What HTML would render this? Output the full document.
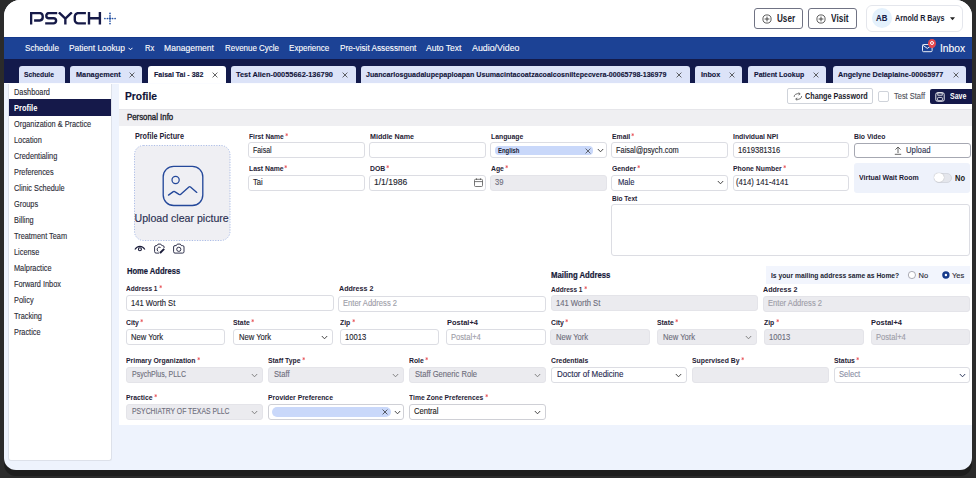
<!DOCTYPE html>
<html><head><meta charset="utf-8"><style>
html,body{margin:0;padding:0;}
body{width:976px;height:478px;background:#2b2b2b;position:relative;overflow:hidden;font-family:"Liberation Sans", sans-serif;}
#shadow{position:absolute;left:4px;top:0;width:968px;height:476px;border-radius:16px 16px 12px 12px;background:#1d1d1d;}
#app{position:absolute;left:4px;top:0;width:968px;height:470px;border-radius:16px 16px 12px 12px;overflow:hidden;background:#eef3fd;}
#w{position:absolute;left:-4px;top:0;width:976px;height:478px;}
.t{position:absolute;white-space:nowrap;line-height:1;transform-origin:0 0;}
.r{position:absolute;}
</style></head><body>
<div id="shadow"></div>
<div id="app"><div id="w">
<div class="r" style="left:0px;top:0px;width:976px;height:37px;background:#fff;"></div>
<svg class="r" style="left:30px;top:12px" width="90" height="14" viewBox="0 0 90 14"><g fill="none" stroke="#161a48" stroke-width="2.4"><path d="M1.1 12.5V1.1H9.8A3.2 3.2 0 0 1 12.7 4.3V5.4A3.2 3.2 0 0 1 9.8 8.5H4.1"/><path transform="translate(15.2 0)" d="M12 1.1H3.7A2.6 2.6 0 0 0 1.1 3.7V3.65A2.6 2.6 0 0 0 3.7 6.25H8.3A2.6 2.6 0 0 1 10.9 8.85V8.8A2.6 2.6 0 0 1 8.3 11.4H0"/><path transform="translate(28.1 0)" d="M0.8 0.4L7.25 6.6L13.7 0.4M7.25 6.6V12.5"/><path transform="translate(43.7 0)" d="M12.2 1.1H4.6A3.5 3.5 0 0 0 1.1 4.6V7.9A3.5 3.5 0 0 0 4.6 11.4H12.2"/><path transform="translate(57.9 0)" d="M1.1 0V12.5M12 0V12.5M1.1 6.25H12"/></g><g fill="#2451a3"><circle cx="80" cy="6.5" r="1.3"/><circle cx="80" cy="1.4" r="0.85"/><circle cx="80" cy="3.9" r="0.85"/><circle cx="80" cy="9.1" r="0.85"/><circle cx="80" cy="11.6" r="0.85"/><circle cx="74.9" cy="6.5" r="0.85"/><circle cx="77.4" cy="6.5" r="0.85"/><circle cx="82.6" cy="6.5" r="0.85"/><circle cx="85.1" cy="6.5" r="0.85"/></g></svg>
<div class="r" style="left:754px;top:8px;width:49px;height:21px;border:1px solid #707384;border-radius:3px;box-sizing:border-box;background:#fff;"></div>
<svg class="r" style="left:761.5px;top:13.5px" width="10" height="10" viewBox="0 0 10 10"><circle cx="5" cy="5" r="4.1" fill="none" stroke="#333" stroke-width="0.8"/><path d="M5 2.6V7.4M2.6 5H7.4" stroke="#333" stroke-width="0.85"/></svg>
<div class="t" style="left:776.7px;top:14px;font-size:10.3px;font-weight:bold;color:#1b1b2b;transform:scaleX(0.790);">User</div>
<div class="r" style="left:808px;top:8px;width:49px;height:21px;border:1px solid #707384;border-radius:3px;box-sizing:border-box;background:#fff;"></div>
<svg class="r" style="left:815.5px;top:13.5px" width="10" height="10" viewBox="0 0 10 10"><circle cx="5" cy="5" r="4.1" fill="none" stroke="#333" stroke-width="0.8"/><path d="M5 2.6V7.4M2.6 5H7.4" stroke="#333" stroke-width="0.85"/></svg>
<div class="t" style="left:831.0px;top:14px;font-size:10.3px;font-weight:bold;color:#1b1b2b;transform:scaleX(0.811);">Visit</div>
<div class="r" style="left:866px;top:5px;width:97px;height:27px;border:1px solid #e4e6ec;border-radius:6px;box-sizing:border-box;background:#fff;"></div>
<div class="r" style="left:872px;top:8px;width:20px;height:20px;background:#e4f1fc;border-radius:50%;"></div>
<div class="t" style="left:876.0px;top:13px;font-size:9.6px;font-weight:bold;color:#171b45;-webkit-text-stroke:0.1px #171b45;transform:scaleX(0.815);">AB</div>
<div class="t" style="left:894.7px;top:14px;font-size:8.4px;font-weight:bold;color:#1b1d33;transform:scaleX(0.859);">Arnold R Bays</div>
<svg class="r" style="left:949.5px;top:16.5px" width="5" height="4" viewBox="0 0 5 4"><path d="M0 0.3H5L2.5 3.3Z" fill="#222"/></svg>
<div class="r" style="left:0px;top:37px;width:976px;height:22px;background:#1c4295;"></div>
<div class="r" style="left:0px;top:37px;width:976px;height:1px;background:#14388a;"></div>
<div class="t" style="left:24.6px;top:44px;font-size:9.2px;font-weight:normal;color:#fff;-webkit-text-stroke:0.1px #fff;transform:scaleX(0.886);">Schedule</div>
<div class="t" style="left:68.9px;top:44px;font-size:9.2px;font-weight:normal;color:#fff;-webkit-text-stroke:0.1px #fff;transform:scaleX(0.912);">Patient Lookup</div>
<div class="t" style="left:145.0px;top:44px;font-size:9.2px;font-weight:normal;color:#fff;-webkit-text-stroke:0.1px #fff;transform:scaleX(0.827);">Rx</div>
<div class="t" style="left:164.4px;top:44px;font-size:9.2px;font-weight:normal;color:#fff;-webkit-text-stroke:0.1px #fff;transform:scaleX(0.931);">Management</div>
<div class="t" style="left:224.6px;top:44px;font-size:9.2px;font-weight:normal;color:#fff;-webkit-text-stroke:0.1px #fff;transform:scaleX(0.866);">Revenue Cycle</div>
<div class="t" style="left:289.0px;top:44px;font-size:9.2px;font-weight:normal;color:#fff;-webkit-text-stroke:0.1px #fff;transform:scaleX(0.878);">Experience</div>
<div class="t" style="left:339.6px;top:44px;font-size:9.2px;font-weight:normal;color:#fff;-webkit-text-stroke:0.1px #fff;transform:scaleX(0.895);">Pre-visit Assessment</div>
<div class="t" style="left:426.3px;top:44px;font-size:9.2px;font-weight:normal;color:#fff;-webkit-text-stroke:0.1px #fff;transform:scaleX(0.930);">Auto Text</div>
<div class="t" style="left:472.0px;top:44px;font-size:9.2px;font-weight:normal;color:#fff;-webkit-text-stroke:0.1px #fff;transform:scaleX(0.961);">Audio/Video</div>
<svg class="r" style="left:127.5px;top:46.5px" width="5" height="4" viewBox="0 0 5 4"><path d="M0.5 0.8L2.5 2.8L4.5 0.8" fill="none" stroke="#fff" stroke-width="1"/></svg>
<svg class="r" style="left:921.5px;top:44px" width="11" height="9" viewBox="0 0 11 9"><rect x="0.5" y="0.5" width="9.6" height="7.2" rx="1" fill="none" stroke="#fff" stroke-width="0.9"/><path d="M0.8 1.2L5.3 4.4L9.8 1.2" fill="none" stroke="#fff" stroke-width="0.9"/></svg>
<div class="r" style="left:928px;top:39px;width:8px;height:9px;background:#e5484d;border-radius:50%;"></div>
<svg class="r" style="left:928px;top:39.2px" width="8" height="8" viewBox="0 0 8 8"><circle cx="4" cy="4" r="1.5" fill="none" stroke="#fff" stroke-width="1"/></svg>
<div class="t" style="left:939.7px;top:44px;font-size:10.4px;font-weight:normal;color:#fff;-webkit-text-stroke:0.1px #fff;transform:scaleX(0.990);">Inbox</div>
<div class="r" style="left:0px;top:59px;width:976px;height:24px;background:#131a4b;"></div>
<div class="r" style="left:0px;top:83px;width:976px;height:1px;background:#fbfcff;"></div>
<div class="r" style="left:19px;top:66px;width:46px;height:17px;background:#dce3f8;border-radius:3px 3px 0 0;"></div>
<div class="t" style="left:24.4px;top:71px;font-size:7.6px;font-weight:bold;color:#11143a;-webkit-text-stroke:0.12px #11143a;transform:scaleX(0.888);">Schedule</div>
<div class="r" style="left:70px;top:66px;width:72px;height:17px;background:#dce3f8;border-radius:3px 3px 0 0;"></div>
<div class="t" style="left:75.8px;top:71px;font-size:7.6px;font-weight:bold;color:#11143a;-webkit-text-stroke:0.12px #11143a;transform:scaleX(0.962);">Management</div>
<svg class="r" style="left:129px;top:72px" width="6" height="6" viewBox="0 0 6 6"><path d="M0.6 0.6L5.4 5.4M5.4 0.6L0.6 5.4" stroke="#333" stroke-width="0.75"/></svg>
<div class="r" style="left:148px;top:66px;width:78px;height:17px;background:#fff;border-radius:3px 3px 0 0;"></div>
<div class="t" style="left:153.8px;top:71px;font-size:7.6px;font-weight:bold;color:#11143a;-webkit-text-stroke:0.12px #11143a;transform:scaleX(0.923);">Faisal Tai - 382</div>
<svg class="r" style="left:211.8px;top:72px" width="6" height="6" viewBox="0 0 6 6"><path d="M0.6 0.6L5.4 5.4M5.4 0.6L0.6 5.4" stroke="#333" stroke-width="0.75"/></svg>
<div class="r" style="left:231px;top:66px;width:125px;height:17px;background:#dce3f8;border-radius:3px 3px 0 0;"></div>
<div class="t" style="left:236.2px;top:71px;font-size:7.6px;font-weight:bold;color:#11143a;-webkit-text-stroke:0.12px #11143a;transform:scaleX(0.972);">Test Alien-00055662-136790</div>
<svg class="r" style="left:342.2px;top:72px" width="6" height="6" viewBox="0 0 6 6"><path d="M0.6 0.6L5.4 5.4M5.4 0.6L0.6 5.4" stroke="#333" stroke-width="0.75"/></svg>
<div class="r" style="left:361px;top:66px;width:329px;height:17px;background:#dce3f8;border-radius:3px 3px 0 0;"></div>
<div class="t" style="left:366.3px;top:71px;font-size:7.6px;font-weight:bold;color:#11143a;-webkit-text-stroke:0.12px #11143a;transform:scaleX(0.934);">Juancarlosguadalupepaploapan Usumacintacoatzacoalcosniltepecvera-00065798-136979</div>
<svg class="r" style="left:676.2px;top:72px" width="6" height="6" viewBox="0 0 6 6"><path d="M0.6 0.6L5.4 5.4M5.4 0.6L0.6 5.4" stroke="#333" stroke-width="0.75"/></svg>
<div class="r" style="left:695px;top:66px;width:47px;height:17px;background:#dce3f8;border-radius:3px 3px 0 0;"></div>
<div class="t" style="left:700.8px;top:71px;font-size:7.6px;font-weight:bold;color:#11143a;-webkit-text-stroke:0.12px #11143a;transform:scaleX(0.947);">Inbox</div>
<svg class="r" style="left:729px;top:72px" width="6" height="6" viewBox="0 0 6 6"><path d="M0.6 0.6L5.4 5.4M5.4 0.6L0.6 5.4" stroke="#333" stroke-width="0.75"/></svg>
<div class="r" style="left:748px;top:66px;width:78px;height:17px;background:#dce3f8;border-radius:3px 3px 0 0;"></div>
<div class="t" style="left:753.7px;top:71px;font-size:7.6px;font-weight:bold;color:#11143a;-webkit-text-stroke:0.12px #11143a;transform:scaleX(0.916);">Patient Lookup</div>
<svg class="r" style="left:813.4px;top:72px" width="6" height="6" viewBox="0 0 6 6"><path d="M0.6 0.6L5.4 5.4M5.4 0.6L0.6 5.4" stroke="#333" stroke-width="0.75"/></svg>
<div class="r" style="left:833px;top:66px;width:133px;height:17px;background:#dce3f8;border-radius:3px 3px 0 0;"></div>
<div class="t" style="left:837.9px;top:71px;font-size:7.6px;font-weight:bold;color:#11143a;-webkit-text-stroke:0.12px #11143a;transform:scaleX(0.953);">Angelyne Delaplaine-00065977</div>
<svg class="r" style="left:952.7px;top:72px" width="6" height="6" viewBox="0 0 6 6"><path d="M0.6 0.6L5.4 5.4M5.4 0.6L0.6 5.4" stroke="#333" stroke-width="0.75"/></svg>
<div class="r" style="left:8px;top:84px;width:104px;height:377px;background:#fff;border:1px solid #dde1ea;border-top:none;border-radius:0 0 3px 3px;box-sizing:border-box;"></div>
<div class="r" style="left:9px;top:99px;width:102px;height:17px;background:#15194a;"></div>
<div class="t" style="left:14.4px;top:88px;font-size:8.8px;font-weight:normal;color:#2a2a35;-webkit-text-stroke:0.12px #2a2a35;transform:scaleX(0.835);">Dashboard</div>
<div class="t" style="left:14.4px;top:104px;font-size:8.8px;font-weight:bold;color:#fff;transform:scaleX(0.851);">Profile</div>
<div class="t" style="left:14.4px;top:120px;font-size:8.8px;font-weight:normal;color:#2a2a35;-webkit-text-stroke:0.12px #2a2a35;transform:scaleX(0.835);">Organization &amp; Practice</div>
<div class="t" style="left:14.4px;top:136px;font-size:8.8px;font-weight:normal;color:#2a2a35;-webkit-text-stroke:0.12px #2a2a35;transform:scaleX(0.835);">Location</div>
<div class="t" style="left:14.4px;top:152px;font-size:8.8px;font-weight:normal;color:#2a2a35;-webkit-text-stroke:0.12px #2a2a35;transform:scaleX(0.835);">Credentialing</div>
<div class="t" style="left:14.4px;top:168px;font-size:8.8px;font-weight:normal;color:#2a2a35;-webkit-text-stroke:0.12px #2a2a35;transform:scaleX(0.835);">Preferences</div>
<div class="t" style="left:14.4px;top:184px;font-size:8.8px;font-weight:normal;color:#2a2a35;-webkit-text-stroke:0.12px #2a2a35;transform:scaleX(0.835);">Clinic Schedule</div>
<div class="t" style="left:14.4px;top:200px;font-size:8.8px;font-weight:normal;color:#2a2a35;-webkit-text-stroke:0.12px #2a2a35;transform:scaleX(0.835);">Groups</div>
<div class="t" style="left:14.4px;top:216px;font-size:8.8px;font-weight:normal;color:#2a2a35;-webkit-text-stroke:0.12px #2a2a35;transform:scaleX(0.835);">Billing</div>
<div class="t" style="left:14.4px;top:232px;font-size:8.8px;font-weight:normal;color:#2a2a35;-webkit-text-stroke:0.12px #2a2a35;transform:scaleX(0.835);">Treatment Team</div>
<div class="t" style="left:14.4px;top:248px;font-size:8.8px;font-weight:normal;color:#2a2a35;-webkit-text-stroke:0.12px #2a2a35;transform:scaleX(0.835);">License</div>
<div class="t" style="left:14.4px;top:264px;font-size:8.8px;font-weight:normal;color:#2a2a35;-webkit-text-stroke:0.12px #2a2a35;transform:scaleX(0.835);">Malpractice</div>
<div class="t" style="left:14.4px;top:280px;font-size:8.8px;font-weight:normal;color:#2a2a35;-webkit-text-stroke:0.12px #2a2a35;transform:scaleX(0.835);">Forward Inbox</div>
<div class="t" style="left:14.4px;top:296px;font-size:8.8px;font-weight:normal;color:#2a2a35;-webkit-text-stroke:0.12px #2a2a35;transform:scaleX(0.835);">Policy</div>
<div class="t" style="left:14.4px;top:312px;font-size:8.8px;font-weight:normal;color:#2a2a35;-webkit-text-stroke:0.12px #2a2a35;transform:scaleX(0.835);">Tracking</div>
<div class="t" style="left:14.4px;top:328px;font-size:8.8px;font-weight:normal;color:#2a2a35;-webkit-text-stroke:0.12px #2a2a35;transform:scaleX(0.835);">Practice</div>
<div class="r" style="left:119px;top:84px;width:857px;height:341px;background:#fff;"></div>
<div class="t" style="left:124.8px;top:91px;font-size:11px;font-weight:bold;color:#0e1236;-webkit-text-stroke:0.15px #0e1236;transform:scaleX(0.935);">Profile</div>
<div class="r" style="left:119px;top:109px;width:857px;height:17px;background:#efeff2;border-top:1px solid #e6e6ea;box-sizing:border-box;"></div>
<div class="t" style="left:126.6px;top:113px;font-size:8.6px;font-weight:normal;color:#1e1e2a;-webkit-text-stroke:0.35px #1e1e2a;transform:scaleX(0.912);">Personal Info</div>
<div class="r" style="left:787px;top:88px;width:86px;height:16px;border:1px solid #cfd3da;border-radius:2px;box-sizing:border-box;background:#fff;"></div>
<svg class="r" style="left:792.5px;top:91.5px" width="10" height="9" viewBox="0 0 10 9"><path d="M1.2 4.9A3.9 2.9 0 0 1 6.6 1.9M8.6 4.1A3.9 2.9 0 0 1 3.2 7.1" fill="none" stroke="#555" stroke-width="0.85"/><path d="M5.6 0.6L7.2 1.9L5.6 3.1M4.2 5.9L2.6 7.1L4.2 8.4" fill="none" stroke="#555" stroke-width="0.8"/></svg>
<div class="t" style="left:805.1px;top:92px;font-size:8.6px;font-weight:bold;color:#1b1b2b;transform:scaleX(0.841);">Change Password</div>
<div class="r" style="left:878px;top:91px;width:11px;height:11px;border:1px solid #cfd3da;border-radius:2px;box-sizing:border-box;background:#fff;"></div>
<div class="t" style="left:893.9px;top:92px;font-size:8.6px;font-weight:normal;color:#50505a;-webkit-text-stroke:0.12px #50505a;transform:scaleX(0.869);">Test Staff</div>
<div class="r" style="left:930px;top:89px;width:50px;height:15px;background:#15194a;border-radius:2px;"></div>
<svg class="r" style="left:935px;top:91.5px" width="10" height="10" viewBox="0 0 10 10"><rect x="0.8" y="0.8" width="8.4" height="8.4" rx="1.5" fill="none" stroke="#fff" stroke-width="0.9"/><rect x="2.8" y="0.8" width="4.4" height="2.4" fill="none" stroke="#fff" stroke-width="0.8"/><rect x="2.6" y="5.4" width="4.8" height="3.4" rx="0.8" fill="none" stroke="#fff" stroke-width="0.8"/></svg>
<div class="t" style="left:950.3px;top:92px;font-size:9px;font-weight:bold;color:#fff;transform:scaleX(0.780);">Save</div>
<div class="t" style="left:134.6px;top:133px;font-size:8.2px;font-weight:bold;color:#1f2235;transform:scaleX(0.881);">Profile Picture</div>
<svg class="r" style="left:134px;top:145px" width="97" height="96" viewBox="0 0 97 96"><rect x="0.5" y="0.5" width="95.5" height="95" rx="9" fill="#efeff3" stroke="#a3b6e4" stroke-width="0.9" stroke-dasharray="1.2 1.4"/></svg>
<svg class="r" style="left:161.5px;top:165.2px" width="42" height="42" viewBox="0 0 42 42"><rect x="1.2" y="1.3" width="39.6" height="39.2" rx="10.5" fill="none" stroke="#24489a" stroke-width="1.35"/><circle cx="13.6" cy="14.9" r="3.6" fill="none" stroke="#24489a" stroke-width="1.25"/><path d="M6.5 30.1L11.3 26.6Q12 26.1 12.7 26.6L17 29.4Q18 30 18.8 29.2L26.9 22Q27.7 21.3 28.5 22L34.8 27.4" fill="none" stroke="#24489a" stroke-width="1.35" stroke-linecap="round" stroke-linejoin="round"/></svg>
<div class="t" style="left:134.5px;top:213px;font-size:10.6px;font-weight:normal;color:#2b3052;-webkit-text-stroke:0.15px #2b3052;">Upload clear picture</div>
<svg class="r" style="left:134px;top:243px" width="12" height="10" viewBox="0 0 12 10"><path d="M0.9 6.6C3.2 2.3 8.6 2.3 10.9 6.6" fill="none" stroke="#1b1d3a" stroke-width="1.1"/><circle cx="5.9" cy="6.3" r="1.5" fill="none" stroke="#1b1d3a" stroke-width="1.1"/></svg>
<svg class="r" style="left:153.5px;top:242.5px" width="11" height="11" viewBox="0 0 11 11"><path d="M3 2.6L4 1.1H6.8L7.8 2.6H8.6A1.5 1.5 0 0 1 10.1 4.1V5M5.2 10.1H2.1A1.5 1.5 0 0 1 0.6 8.6V4.1A1.5 1.5 0 0 1 2.1 2.6H3" fill="none" stroke="#1b1d3a" stroke-width="0.9" stroke-linejoin="round"/><path d="M6.6 4.5A2.2 2.2 0 1 0 4.2 8.4" fill="none" stroke="#1b1d3a" stroke-width="0.9"/><path d="M6 10L10.2 5.8" stroke="#1b1d3a" stroke-width="1.9"/></svg>
<svg class="r" style="left:172.5px;top:242.5px" width="12" height="11" viewBox="0 0 12 11"><path d="M3.3 2.6L4.3 1.1H7.3L8.3 2.6H9.6A1.4 1.4 0 0 1 11 4V8.7A1.4 1.4 0 0 1 9.6 10.1H2A1.4 1.4 0 0 1 0.6 8.7V4A1.4 1.4 0 0 1 2 2.6Z" fill="none" stroke="#1b1d3a" stroke-width="0.9" stroke-linejoin="round"/><circle cx="5.8" cy="6.3" r="2.1" fill="none" stroke="#1b1d3a" stroke-width="0.9"/></svg>
<div class="t" style="left:248.5px;top:133px;font-size:7.6px;font-weight:bold;color:#1f2235;transform:scaleX(0.883);">First Name</div>
<svg class="r" style="left:284.5px;top:133.4px" width="3.4" height="3.4" viewBox="0 0 4 4"><path d="M2 0.3V3.7M0.5 1.1L3.5 2.9M3.5 1.1L0.5 2.9" stroke="#e5484d" stroke-width="0.75"/></svg>
<div class="t" style="left:369.5px;top:133px;font-size:7.6px;font-weight:bold;color:#1f2235;transform:scaleX(0.939);">Middle Name</div>
<div class="t" style="left:490.7px;top:133px;font-size:7.6px;font-weight:bold;color:#1f2235;transform:scaleX(0.900);">Language</div>
<div class="t" style="left:611.5px;top:133px;font-size:7.6px;font-weight:bold;color:#1f2235;transform:scaleX(0.900);">Email</div>
<svg class="r" style="left:631.1px;top:133.4px" width="3.4" height="3.4" viewBox="0 0 4 4"><path d="M2 0.3V3.7M0.5 1.1L3.5 2.9M3.5 1.1L0.5 2.9" stroke="#e5484d" stroke-width="0.75"/></svg>
<div class="t" style="left:733.2px;top:133px;font-size:7.6px;font-weight:bold;color:#1f2235;transform:scaleX(0.900);">Individual NPI</div>
<div class="t" style="left:854.0px;top:133px;font-size:7.6px;font-weight:bold;color:#1f2235;transform:scaleX(0.900);">Bio Video</div>
<div class="r" style="left:248px;top:142px;width:117px;height:16px;background:#fff;border:1px solid #dcdde3;border-radius:3px;box-sizing:border-box;"></div>
<div class="t" style="left:252.9px;top:147px;font-size:8.2px;font-weight:normal;color:#23232d;-webkit-text-stroke:0.12px #23232d;transform:scaleX(0.850);">Faisal</div>
<div class="r" style="left:369px;top:142px;width:117px;height:16px;background:#fff;border:1px solid #dcdde3;border-radius:3px;box-sizing:border-box;"></div>
<div class="r" style="left:490px;top:142px;width:117px;height:16px;background:#fff;border:1px solid #dcdde3;border-radius:3px;box-sizing:border-box;"></div>
<div class="r" style="left:495px;top:146px;width:98px;height:9px;background:#c9d8fa;border-radius:4px;"></div>
<div class="t" style="left:497.5px;top:147px;font-size:7.6px;font-weight:bold;color:#1b1d33;transform:scaleX(0.783);">English</div>
<svg class="r" style="left:584.5px;top:147.5px" width="6" height="6" viewBox="0 0 6 6"><path d="M0.6 0.6L5.4 5.4M5.4 0.6L0.6 5.4" stroke="#333" stroke-width="0.7"/></svg>
<svg class="r" style="left:596.5px;top:147.7px" width="7" height="5" viewBox="0 0 7 5"><path d="M0.8 1L3.5 3.8L6.2 1" fill="none" stroke="#333" stroke-width="0.9"/></svg>
<div class="r" style="left:611px;top:142px;width:117px;height:16px;background:#fff;border:1px solid #dcdde3;border-radius:3px;box-sizing:border-box;"></div>
<div class="t" style="left:616.2px;top:147px;font-size:8.2px;font-weight:normal;color:#23232d;-webkit-text-stroke:0.12px #23232d;transform:scaleX(0.905);">Faisal@psych.com</div>
<div class="r" style="left:733px;top:142px;width:116px;height:16px;background:#fff;border:1px solid #dcdde3;border-radius:3px;box-sizing:border-box;"></div>
<div class="t" style="left:737.5px;top:147px;font-size:8.2px;font-weight:normal;color:#23232d;-webkit-text-stroke:0.12px #23232d;transform:scaleX(0.928);">1619381316</div>
<div class="r" style="left:854px;top:143px;width:117px;height:15px;background:#fff;border:1px solid #a6a8b2;border-radius:3px;box-sizing:border-box;"></div>
<svg class="r" style="left:894px;top:145.5px" width="8" height="9" viewBox="0 0 8 9"><path d="M4 7V1.2M1.4 3.6L4 1L6.6 3.6M0.8 8.3H7.2" fill="none" stroke="#555" stroke-width="0.9"/></svg>
<div class="t" style="left:905.9px;top:146px;font-size:8.4px;font-weight:normal;color:#2c3250;-webkit-text-stroke:0.12px #2c3250;transform:scaleX(0.924);">Upload</div>
<div class="t" style="left:248.5px;top:165px;font-size:7.6px;font-weight:bold;color:#1f2235;transform:scaleX(0.900);">Last Name</div>
<svg class="r" style="left:284.4px;top:165.4px" width="3.4" height="3.4" viewBox="0 0 4 4"><path d="M2 0.3V3.7M0.5 1.1L3.5 2.9M3.5 1.1L0.5 2.9" stroke="#e5484d" stroke-width="0.75"/></svg>
<div class="t" style="left:369.5px;top:165px;font-size:7.6px;font-weight:bold;color:#1f2235;transform:scaleX(0.900);">DOB</div>
<svg class="r" style="left:386.0px;top:165.4px" width="3.4" height="3.4" viewBox="0 0 4 4"><path d="M2 0.3V3.7M0.5 1.1L3.5 2.9M3.5 1.1L0.5 2.9" stroke="#e5484d" stroke-width="0.75"/></svg>
<div class="t" style="left:490.7px;top:165px;font-size:7.6px;font-weight:bold;color:#1f2235;transform:scaleX(0.900);">Age</div>
<svg class="r" style="left:504.9px;top:165.4px" width="3.4" height="3.4" viewBox="0 0 4 4"><path d="M2 0.3V3.7M0.5 1.1L3.5 2.9M3.5 1.1L0.5 2.9" stroke="#e5484d" stroke-width="0.75"/></svg>
<div class="t" style="left:611.5px;top:165px;font-size:7.6px;font-weight:bold;color:#1f2235;transform:scaleX(0.900);">Gender</div>
<svg class="r" style="left:636.7px;top:165.4px" width="3.4" height="3.4" viewBox="0 0 4 4"><path d="M2 0.3V3.7M0.5 1.1L3.5 2.9M3.5 1.1L0.5 2.9" stroke="#e5484d" stroke-width="0.75"/></svg>
<div class="t" style="left:733.2px;top:165px;font-size:7.6px;font-weight:bold;color:#1f2235;transform:scaleX(0.900);">Phone Number</div>
<svg class="r" style="left:783.1px;top:165.4px" width="3.4" height="3.4" viewBox="0 0 4 4"><path d="M2 0.3V3.7M0.5 1.1L3.5 2.9M3.5 1.1L0.5 2.9" stroke="#e5484d" stroke-width="0.75"/></svg>
<div class="r" style="left:248px;top:175px;width:117px;height:16px;background:#fff;border:1px solid #dcdde3;border-radius:3px;box-sizing:border-box;"></div>
<div class="t" style="left:252.9px;top:179px;font-size:8.2px;font-weight:normal;color:#23232d;-webkit-text-stroke:0.12px #23232d;transform:scaleX(0.930);">Tai</div>
<div class="r" style="left:369px;top:175px;width:117px;height:16px;background:#fff;border:1px solid #dcdde3;border-radius:3px;box-sizing:border-box;"></div>
<div class="t" style="left:373.9px;top:179px;font-size:8.2px;font-weight:normal;color:#23232d;-webkit-text-stroke:0.12px #23232d;transform:scaleX(1.043);">1/1/1986</div>
<svg class="r" style="left:474px;top:177.8px" width="9" height="9" viewBox="0 0 9 9"><rect x="0.5" y="1.3" width="8" height="7.2" rx="1" fill="none" stroke="#555" stroke-width="0.8"/><path d="M0.5 3.6H8.5M2.5 0.3V2M6.5 0.3V2" stroke="#555" stroke-width="0.8"/></svg>
<div class="r" style="left:490px;top:175px;width:117px;height:16px;background:#ebebef;border:1px solid #e4e4e9;border-radius:3px;box-sizing:border-box;"></div>
<div class="t" style="left:494.8px;top:179px;font-size:8.2px;font-weight:normal;color:#6e6e7c;-webkit-text-stroke:0.12px #6e6e7c;transform:scaleX(0.930);">39</div>
<div class="r" style="left:611px;top:175px;width:117px;height:16px;background:#fff;border:1px solid #dcdde3;border-radius:3px;box-sizing:border-box;"></div>
<div class="t" style="left:617.5px;top:179px;font-size:8.2px;font-weight:normal;color:#1f2a50;-webkit-text-stroke:0.12px #1f2a50;transform:scaleX(0.928);">Male</div>
<svg class="r" style="left:716.5px;top:180.3px" width="7" height="5" viewBox="0 0 7 5"><path d="M0.8 1L3.5 3.8L6.2 1" fill="none" stroke="#333" stroke-width="0.9"/></svg>
<div class="r" style="left:733px;top:175px;width:116px;height:16px;background:#fff;border:1px solid #dcdde3;border-radius:3px;box-sizing:border-box;"></div>
<div class="t" style="left:736.4px;top:179px;font-size:8.2px;font-weight:normal;color:#23232d;-webkit-text-stroke:0.12px #23232d;transform:scaleX(0.938);">(414) 141-4141</div>
<div class="r" style="left:854px;top:163px;width:116px;height:30px;background:#eef2fb;border-radius:3px;"></div>
<div class="t" style="left:859.1px;top:174px;font-size:7.9px;font-weight:bold;color:#1f2235;transform:scaleX(0.886);">Virtual Wait Room</div>
<div class="r" style="left:934px;top:173px;width:18px;height:10px;background:#e4e6ec;border:1px solid #d5d8e0;border-radius:6px;box-sizing:border-box;"></div>
<div class="r" style="left:934px;top:173px;width:10px;height:9px;background:#fff;border-radius:50%;box-shadow:0 0 1px #999;"></div>
<div class="t" style="left:954.5px;top:175px;font-size:8.2px;font-weight:bold;color:#222;transform:scaleX(0.915);">No</div>
<div class="t" style="left:611.8px;top:195px;font-size:7.6px;font-weight:bold;color:#1f2235;transform:scaleX(0.857);">Bio Text</div>
<div class="r" style="left:611px;top:204px;width:359px;height:52px;background:#fff;border:1px solid #dcdde3;border-radius:3px;box-sizing:border-box;"></div>
<div class="t" style="left:126.9px;top:267px;font-size:8.4px;font-weight:bold;color:#141838;-webkit-text-stroke:0.2px #141838;transform:scaleX(0.904);">Home Address</div>
<div class="t" style="left:126.0px;top:285px;font-size:7.6px;font-weight:bold;color:#1f2235;transform:scaleX(0.857);">Address 1</div>
<svg class="r" style="left:158.8px;top:285.4px" width="3.4" height="3.4" viewBox="0 0 4 4"><path d="M2 0.3V3.7M0.5 1.1L3.5 2.9M3.5 1.1L0.5 2.9" stroke="#e5484d" stroke-width="0.75"/></svg>
<div class="t" style="left:338.5px;top:285px;font-size:7.6px;font-weight:bold;color:#1f2235;transform:scaleX(0.936);">Address 2</div>
<div class="r" style="left:126px;top:295px;width:208px;height:16px;background:#fff;border:1px solid #dcdde3;border-radius:3px;box-sizing:border-box;"></div>
<div class="t" style="left:131.3px;top:300px;font-size:8.2px;font-weight:normal;color:#23232d;-webkit-text-stroke:0.12px #23232d;transform:scaleX(0.930);">141 Worth St</div>
<div class="r" style="left:338px;top:296px;width:208px;height:16px;background:#fff;border:1px solid #dcdde3;border-radius:3px;box-sizing:border-box;"></div>
<div class="t" style="left:342.9px;top:300px;font-size:8.2px;font-weight:normal;color:#9d9da8;-webkit-text-stroke:0.12px #9d9da8;transform:scaleX(0.927);">Enter Address 2</div>
<div class="t" style="left:126.2px;top:319px;font-size:7.6px;font-weight:bold;color:#1f2235;transform:scaleX(0.900);">City</div>
<svg class="r" style="left:140.4px;top:319.4px" width="3.4" height="3.4" viewBox="0 0 4 4"><path d="M2 0.3V3.7M0.5 1.1L3.5 2.9M3.5 1.1L0.5 2.9" stroke="#e5484d" stroke-width="0.75"/></svg>
<div class="t" style="left:233.2px;top:319px;font-size:7.6px;font-weight:bold;color:#1f2235;transform:scaleX(0.900);">State</div>
<svg class="r" style="left:251.2px;top:319.4px" width="3.4" height="3.4" viewBox="0 0 4 4"><path d="M2 0.3V3.7M0.5 1.1L3.5 2.9M3.5 1.1L0.5 2.9" stroke="#e5484d" stroke-width="0.75"/></svg>
<div class="t" style="left:340.1px;top:319px;font-size:7.6px;font-weight:bold;color:#1f2235;transform:scaleX(0.900);">Zip</div>
<svg class="r" style="left:351.7px;top:319.4px" width="3.4" height="3.4" viewBox="0 0 4 4"><path d="M2 0.3V3.7M0.5 1.1L3.5 2.9M3.5 1.1L0.5 2.9" stroke="#e5484d" stroke-width="0.75"/></svg>
<div class="t" style="left:446.5px;top:319px;font-size:7.6px;font-weight:bold;color:#1f2235;transform:scaleX(0.982);">Postal+4</div>
<div class="r" style="left:126px;top:329px;width:99px;height:16px;background:#fff;border:1px solid #dcdde3;border-radius:3px;box-sizing:border-box;"></div>
<div class="t" style="left:131.3px;top:334px;font-size:8.2px;font-weight:normal;color:#23232d;-webkit-text-stroke:0.12px #23232d;transform:scaleX(0.930);">New York</div>
<div class="r" style="left:233px;top:329px;width:100px;height:16px;background:#fff;border:1px solid #dcdde3;border-radius:3px;box-sizing:border-box;"></div>
<div class="t" style="left:238.7px;top:334px;font-size:8.2px;font-weight:normal;color:#23232d;-webkit-text-stroke:0.12px #23232d;transform:scaleX(0.930);">New York</div>
<svg class="r" style="left:320.5px;top:334.7px" width="7" height="5" viewBox="0 0 7 5"><path d="M0.8 1L3.5 3.8L6.2 1" fill="none" stroke="#333" stroke-width="0.9"/></svg>
<div class="r" style="left:340px;top:329px;width:99px;height:16px;background:#fff;border:1px solid #dcdde3;border-radius:3px;box-sizing:border-box;"></div>
<div class="t" style="left:344.6px;top:334px;font-size:8.2px;font-weight:normal;color:#23232d;-webkit-text-stroke:0.12px #23232d;transform:scaleX(0.930);">10013</div>
<div class="r" style="left:446px;top:329px;width:100px;height:16px;background:#fff;border:1px solid #dcdde3;border-radius:3px;box-sizing:border-box;"></div>
<div class="t" style="left:450.9px;top:334px;font-size:8.2px;font-weight:normal;color:#9d9da8;-webkit-text-stroke:0.12px #9d9da8;transform:scaleX(0.930);">Postal+4</div>
<div class="t" style="left:551.2px;top:271px;font-size:8.4px;font-weight:bold;color:#141838;-webkit-text-stroke:0.2px #141838;transform:scaleX(0.923);">Mailing Address</div>
<div class="r" style="left:766px;top:266px;width:204px;height:18px;background:#f2f5fd;"></div>
<div class="t" style="left:770.6px;top:272px;font-size:7.4px;font-weight:bold;color:#1b1d33;transform:scaleX(0.910);">Is your mailing address same as Home?</div>
<svg class="r" style="left:907px;top:270px" width="10" height="10" viewBox="0 0 10 10"><circle cx="4.9" cy="5" r="3.6" fill="#fff" stroke="#8a8a95" stroke-width="0.7"/></svg>
<div class="t" style="left:918.6px;top:272px;font-size:7.5px;font-weight:normal;color:#2a2a35;-webkit-text-stroke:0.12px #2a2a35;">No</div>
<svg class="r" style="left:941px;top:270px" width="10" height="10" viewBox="0 0 10 10"><circle cx="4.9" cy="5" r="3.7" fill="#163a8a"/><circle cx="4.9" cy="5" r="1.2" fill="#fff"/></svg>
<div class="t" style="left:952.0px;top:272px;font-size:7.5px;font-weight:normal;color:#2a2a35;-webkit-text-stroke:0.12px #2a2a35;">Yes</div>
<div class="t" style="left:550.7px;top:286px;font-size:7.6px;font-weight:bold;color:#1f2235;transform:scaleX(0.857);">Address 1</div>
<svg class="r" style="left:583.5px;top:286.4px" width="3.4" height="3.4" viewBox="0 0 4 4"><path d="M2 0.3V3.7M0.5 1.1L3.5 2.9M3.5 1.1L0.5 2.9" stroke="#e5484d" stroke-width="0.75"/></svg>
<div class="t" style="left:762.7px;top:286px;font-size:7.6px;font-weight:bold;color:#1f2235;transform:scaleX(0.936);">Address 2</div>
<div class="r" style="left:551px;top:295px;width:207px;height:16px;background:#ebebef;border:1px solid #e4e4e9;border-radius:3px;box-sizing:border-box;"></div>
<div class="t" style="left:555.5px;top:300px;font-size:8.2px;font-weight:normal;color:#6e6e7c;-webkit-text-stroke:0.12px #6e6e7c;transform:scaleX(0.930);">141 Worth St</div>
<div class="r" style="left:763px;top:296px;width:207px;height:16px;background:#ebebef;border:1px solid #e4e4e9;border-radius:3px;box-sizing:border-box;"></div>
<div class="t" style="left:767.5px;top:300px;font-size:8.2px;font-weight:normal;color:#9d9da8;-webkit-text-stroke:0.12px #9d9da8;transform:scaleX(0.927);">Enter Address 2</div>
<div class="t" style="left:550.7px;top:319px;font-size:7.6px;font-weight:bold;color:#1f2235;transform:scaleX(0.900);">City</div>
<svg class="r" style="left:564.9px;top:319.4px" width="3.4" height="3.4" viewBox="0 0 4 4"><path d="M2 0.3V3.7M0.5 1.1L3.5 2.9M3.5 1.1L0.5 2.9" stroke="#e5484d" stroke-width="0.75"/></svg>
<div class="t" style="left:657.2px;top:319px;font-size:7.6px;font-weight:bold;color:#1f2235;transform:scaleX(0.900);">State</div>
<svg class="r" style="left:675.2px;top:319.4px" width="3.4" height="3.4" viewBox="0 0 4 4"><path d="M2 0.3V3.7M0.5 1.1L3.5 2.9M3.5 1.1L0.5 2.9" stroke="#e5484d" stroke-width="0.75"/></svg>
<div class="t" style="left:764.0px;top:319px;font-size:7.6px;font-weight:bold;color:#1f2235;transform:scaleX(0.900);">Zip</div>
<svg class="r" style="left:775.6px;top:319.4px" width="3.4" height="3.4" viewBox="0 0 4 4"><path d="M2 0.3V3.7M0.5 1.1L3.5 2.9M3.5 1.1L0.5 2.9" stroke="#e5484d" stroke-width="0.75"/></svg>
<div class="t" style="left:871.3px;top:319px;font-size:7.6px;font-weight:bold;color:#1f2235;transform:scaleX(0.982);">Postal+4</div>
<div class="r" style="left:550px;top:329px;width:100px;height:16px;background:#ebebef;border:1px solid #e4e4e9;border-radius:3px;box-sizing:border-box;"></div>
<div class="t" style="left:555.5px;top:334px;font-size:8.2px;font-weight:normal;color:#6e6e7c;-webkit-text-stroke:0.12px #6e6e7c;transform:scaleX(0.930);">New York</div>
<div class="r" style="left:657px;top:329px;width:100px;height:16px;background:#ebebef;border:1px solid #e4e4e9;border-radius:3px;box-sizing:border-box;"></div>
<div class="t" style="left:663.0px;top:334px;font-size:8.2px;font-weight:normal;color:#6e6e7c;-webkit-text-stroke:0.12px #6e6e7c;transform:scaleX(0.930);">New York</div>
<svg class="r" style="left:745.0px;top:335.1px" width="7" height="5" viewBox="0 0 7 5"><path d="M0.8 1L3.5 3.8L6.2 1" fill="none" stroke="#777" stroke-width="0.9"/></svg>
<div class="r" style="left:764px;top:329px;width:100px;height:16px;background:#ebebef;border:1px solid #e4e4e9;border-radius:3px;box-sizing:border-box;"></div>
<div class="t" style="left:768.5px;top:334px;font-size:8.2px;font-weight:normal;color:#6e6e7c;-webkit-text-stroke:0.12px #6e6e7c;transform:scaleX(0.930);">10013</div>
<div class="r" style="left:871px;top:329px;width:99px;height:16px;background:#ebebef;border:1px solid #e4e4e9;border-radius:3px;box-sizing:border-box;"></div>
<div class="t" style="left:875.5px;top:334px;font-size:8.2px;font-weight:normal;color:#9d9da8;-webkit-text-stroke:0.12px #9d9da8;transform:scaleX(0.930);">Postal+4</div>
<div class="t" style="left:126.2px;top:357px;font-size:7.6px;font-weight:bold;color:#1f2235;transform:scaleX(0.905);">Primary Organization</div>
<svg class="r" style="left:197.1px;top:357.4px" width="3.4" height="3.4" viewBox="0 0 4 4"><path d="M2 0.3V3.7M0.5 1.1L3.5 2.9M3.5 1.1L0.5 2.9" stroke="#e5484d" stroke-width="0.75"/></svg>
<div class="t" style="left:268.2px;top:357px;font-size:7.6px;font-weight:bold;color:#1f2235;transform:scaleX(0.900);">Staff Type</div>
<svg class="r" style="left:302.1px;top:357.4px" width="3.4" height="3.4" viewBox="0 0 4 4"><path d="M2 0.3V3.7M0.5 1.1L3.5 2.9M3.5 1.1L0.5 2.9" stroke="#e5484d" stroke-width="0.75"/></svg>
<div class="t" style="left:409.2px;top:357px;font-size:7.6px;font-weight:bold;color:#1f2235;transform:scaleX(0.900);">Role</div>
<svg class="r" style="left:425.3px;top:357.4px" width="3.4" height="3.4" viewBox="0 0 4 4"><path d="M2 0.3V3.7M0.5 1.1L3.5 2.9M3.5 1.1L0.5 2.9" stroke="#e5484d" stroke-width="0.75"/></svg>
<div class="t" style="left:551.2px;top:357px;font-size:7.6px;font-weight:bold;color:#1f2235;transform:scaleX(0.900);">Credentials</div>
<div class="t" style="left:692.2px;top:357px;font-size:7.6px;font-weight:bold;color:#1f2235;transform:scaleX(0.900);">Supervised By</div>
<svg class="r" style="left:741.0px;top:357.4px" width="3.4" height="3.4" viewBox="0 0 4 4"><path d="M2 0.3V3.7M0.5 1.1L3.5 2.9M3.5 1.1L0.5 2.9" stroke="#e5484d" stroke-width="0.75"/></svg>
<div class="t" style="left:834.2px;top:357px;font-size:7.6px;font-weight:bold;color:#1f2235;transform:scaleX(0.900);">Status</div>
<svg class="r" style="left:856.4px;top:357.4px" width="3.4" height="3.4" viewBox="0 0 4 4"><path d="M2 0.3V3.7M0.5 1.1L3.5 2.9M3.5 1.1L0.5 2.9" stroke="#e5484d" stroke-width="0.75"/></svg>
<div class="r" style="left:126px;top:367px;width:137px;height:16px;background:#ebebef;border:1px solid #e4e4e9;border-radius:3px;box-sizing:border-box;"></div>
<div class="t" style="left:131.7px;top:371px;font-size:8.2px;font-weight:normal;color:#6e6e7c;-webkit-text-stroke:0.12px #6e6e7c;transform:scaleX(0.854);">PsychPlus, PLLC</div>
<svg class="r" style="left:251.0px;top:372.5px" width="7" height="5" viewBox="0 0 7 5"><path d="M0.8 1L3.5 3.8L6.2 1" fill="none" stroke="#777" stroke-width="0.9"/></svg>
<div class="r" style="left:268px;top:367px;width:136px;height:16px;background:#ebebef;border:1px solid #e4e4e9;border-radius:3px;box-sizing:border-box;"></div>
<div class="t" style="left:273.5px;top:371px;font-size:8.2px;font-weight:normal;color:#6e6e7c;-webkit-text-stroke:0.12px #6e6e7c;transform:scaleX(0.930);">Staff</div>
<svg class="r" style="left:392.0px;top:372.5px" width="7" height="5" viewBox="0 0 7 5"><path d="M0.8 1L3.5 3.8L6.2 1" fill="none" stroke="#777" stroke-width="0.9"/></svg>
<div class="r" style="left:409px;top:367px;width:137px;height:16px;background:#ebebef;border:1px solid #e4e4e9;border-radius:3px;box-sizing:border-box;"></div>
<div class="t" style="left:414.5px;top:371px;font-size:8.2px;font-weight:normal;color:#6e6e7c;-webkit-text-stroke:0.12px #6e6e7c;transform:scaleX(0.930);">Staff Generic Role</div>
<svg class="r" style="left:533.5px;top:372.5px" width="7" height="5" viewBox="0 0 7 5"><path d="M0.8 1L3.5 3.8L6.2 1" fill="none" stroke="#777" stroke-width="0.9"/></svg>
<div class="r" style="left:551px;top:367px;width:136px;height:16px;background:#fff;border:1px solid #dcdde3;border-radius:3px;box-sizing:border-box;"></div>
<div class="t" style="left:556.7px;top:371px;font-size:8.2px;font-weight:normal;color:#1f2a50;-webkit-text-stroke:0.12px #1f2a50;transform:scaleX(0.974);">Doctor of Medicine</div>
<svg class="r" style="left:674.5px;top:372.5px" width="7" height="5" viewBox="0 0 7 5"><path d="M0.8 1L3.5 3.8L6.2 1" fill="none" stroke="#333" stroke-width="0.9"/></svg>
<div class="r" style="left:692px;top:367px;width:137px;height:16px;background:#ebebef;border:1px solid #e4e4e9;border-radius:3px;box-sizing:border-box;"></div>
<div class="r" style="left:834px;top:367px;width:136px;height:16px;background:#fff;border:1px solid #dcdde3;border-radius:3px;box-sizing:border-box;"></div>
<div class="t" style="left:839.0px;top:371px;font-size:8.2px;font-weight:normal;color:#8a8fa5;-webkit-text-stroke:0.12px #8a8fa5;transform:scaleX(0.930);">Select</div>
<svg class="r" style="left:958.5px;top:372.5px" width="7" height="5" viewBox="0 0 7 5"><path d="M0.8 1L3.5 3.8L6.2 1" fill="none" stroke="#1f2a50" stroke-width="0.9"/></svg>
<div class="t" style="left:126.2px;top:394px;font-size:7.6px;font-weight:bold;color:#1f2235;transform:scaleX(0.900);">Practice</div>
<svg class="r" style="left:154.1px;top:394.4px" width="3.4" height="3.4" viewBox="0 0 4 4"><path d="M2 0.3V3.7M0.5 1.1L3.5 2.9M3.5 1.1L0.5 2.9" stroke="#e5484d" stroke-width="0.75"/></svg>
<div class="t" style="left:268.2px;top:394px;font-size:7.6px;font-weight:bold;color:#1f2235;transform:scaleX(0.900);">Provider Preference</div>
<div class="t" style="left:409.2px;top:394px;font-size:7.6px;font-weight:bold;color:#1f2235;transform:scaleX(0.890);">Time Zone Preferences</div>
<svg class="r" style="left:484.8px;top:394.4px" width="3.4" height="3.4" viewBox="0 0 4 4"><path d="M2 0.3V3.7M0.5 1.1L3.5 2.9M3.5 1.1L0.5 2.9" stroke="#e5484d" stroke-width="0.75"/></svg>
<div class="r" style="left:126px;top:404px;width:137px;height:16px;background:#ebebef;border:1px solid #e4e4e9;border-radius:3px;box-sizing:border-box;"></div>
<div class="t" style="left:131.7px;top:408px;font-size:8.2px;font-weight:normal;color:#6e6e7c;-webkit-text-stroke:0.12px #6e6e7c;transform:scaleX(0.835);">PSYCHIATRY OF TEXAS PLLC</div>
<svg class="r" style="left:251.0px;top:409.7px" width="7" height="5" viewBox="0 0 7 5"><path d="M0.8 1L3.5 3.8L6.2 1" fill="none" stroke="#777" stroke-width="0.9"/></svg>
<div class="r" style="left:268px;top:404px;width:136px;height:16px;background:#fff;border:1px solid #cfd0d6;border-radius:3px;box-sizing:border-box;"></div>
<div class="r" style="left:272px;top:407px;width:119px;height:10px;background:#c9d8fa;border-radius:5px;"></div>
<svg class="r" style="left:382.3px;top:409px" width="6" height="6" viewBox="0 0 6 6"><path d="M0.6 0.6L5.4 5.4M5.4 0.6L0.6 5.4" stroke="#222" stroke-width="0.7"/></svg>
<svg class="r" style="left:394.3px;top:409.7px" width="7" height="5" viewBox="0 0 7 5"><path d="M0.8 1L3.5 3.8L6.2 1" fill="none" stroke="#333" stroke-width="0.9"/></svg>
<div class="r" style="left:409px;top:404px;width:137px;height:16px;background:#fff;border:1px solid #cfd0d6;border-radius:3px;box-sizing:border-box;"></div>
<div class="t" style="left:414.1px;top:408px;font-size:8.2px;font-weight:normal;color:#222;-webkit-text-stroke:0.12px #222;transform:scaleX(0.930);">Central</div>
<svg class="r" style="left:534.0px;top:409.7px" width="7" height="5" viewBox="0 0 7 5"><path d="M0.8 1L3.5 3.8L6.2 1" fill="none" stroke="#333" stroke-width="0.9"/></svg>
</div></div>
</body></html>
